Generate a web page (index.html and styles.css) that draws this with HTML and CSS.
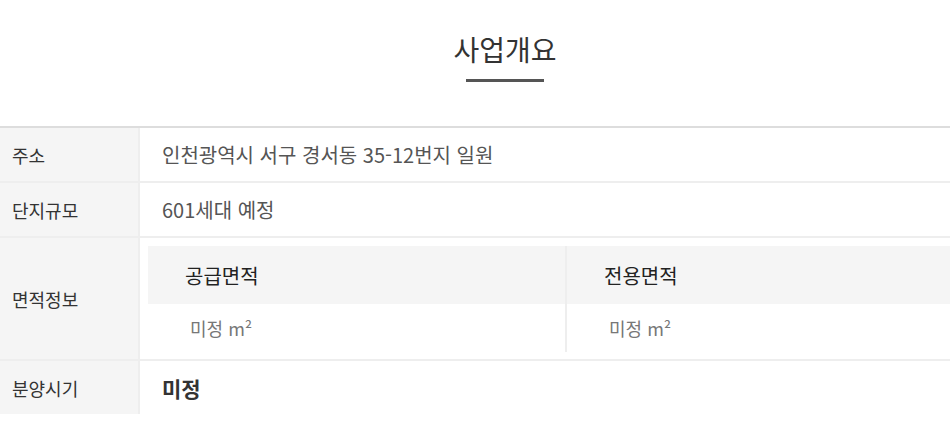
FILE: index.html
```html
<!DOCTYPE html>
<html lang="ko">
<head>
<meta charset="utf-8">
<title>사업개요</title>
<link rel="stylesheet" href="styles.css">
</head>
<body>
<section class="overview">
  <div class="head">
    <h2 class="title">사업개요</h2>
    <span class="title-line"></span>
  </div>
  <div class="info">
    <div class="row">
      <div class="th">주소</div>
      <div class="td">인천광역시 서구 경서동 35-12번지 일원</div>
    </div>
    <div class="row">
      <div class="th">단지규모</div>
      <div class="td">601세대 예정</div>
    </div>
    <div class="row">
      <div class="th">면적정보</div>
      <div class="td td-area">
        <div class="area">
          <div class="area-col">
            <div class="area-head">공급면적</div>
            <div class="area-val">미정 m²</div>
          </div>
          <div class="area-col area-col-2">
            <div class="area-head">전용면적</div>
            <div class="area-val">미정 m²</div>
          </div>
        </div>
      </div>
    </div>
    <div class="row row-last">
      <div class="th">분양시기</div>
      <div class="td td-strong">미정</div>
    </div>
  </div>
</section>
</body>
</html>
```
FILE: styles.css
```css
html, body {
  margin: 0;
  padding: 0;
  background: #fff;
}
body {
  font-family: "Noto Sans CJK KR", "Noto Sans", sans-serif;
  color: #333;
}
.overview {
  padding-top: 28px;
}
.head {
  display: flex;
  flex-direction: column;
  align-items: center;
  padding-left: 60px;
}
.title {
  margin: 0;
  font-size: 28px;
  font-weight: 400;
  line-height: 42px;
  color: #333;
}
.title-line {
  display: block;
  width: 78px;
  height: 3px;
  background: #555;
  margin-top: 9px;
}
.info {
  margin-top: 44px;
  border-top: 2px solid #ddd;
}
.row {
  display: grid;
  grid-template-columns: 140px 1fr;
  border-bottom: 2px solid #eee;
}
.row-last {
  border-bottom: 0;
}
.th {
  background: #f5f5f5;
  border-right: 2px solid #eee;
  padding-left: 12px;
  min-height: 53px;
  display: flex;
  align-items: center;
  font-size: 18px;
  color: #333;
}
.td {
  padding-left: 22px;
  display: flex;
  align-items: center;
  font-size: 20px;
  color: #555;
}
.td-strong {
  font-size: 21px;
  font-weight: 700;
  color: #333;
}
.td.td-area {
  padding: 8px 0 7px 8px;
  display: block;
}
.area {
  display: grid;
  grid-template-columns: 417px 1fr;
}
.area-col-2 {
  border-left: 2px solid #eee;
}
.area-head {
  background: #f5f5f5;
  height: 58px;
  display: flex;
  align-items: center;
  padding-left: 37px;
  font-size: 20px;
  font-weight: 400;
  color: #222;
}
.area-val {
  height: 48px;
  display: flex;
  align-items: center;
  padding-left: 42px;
  font-size: 18px;
  color: #777;
}
```
